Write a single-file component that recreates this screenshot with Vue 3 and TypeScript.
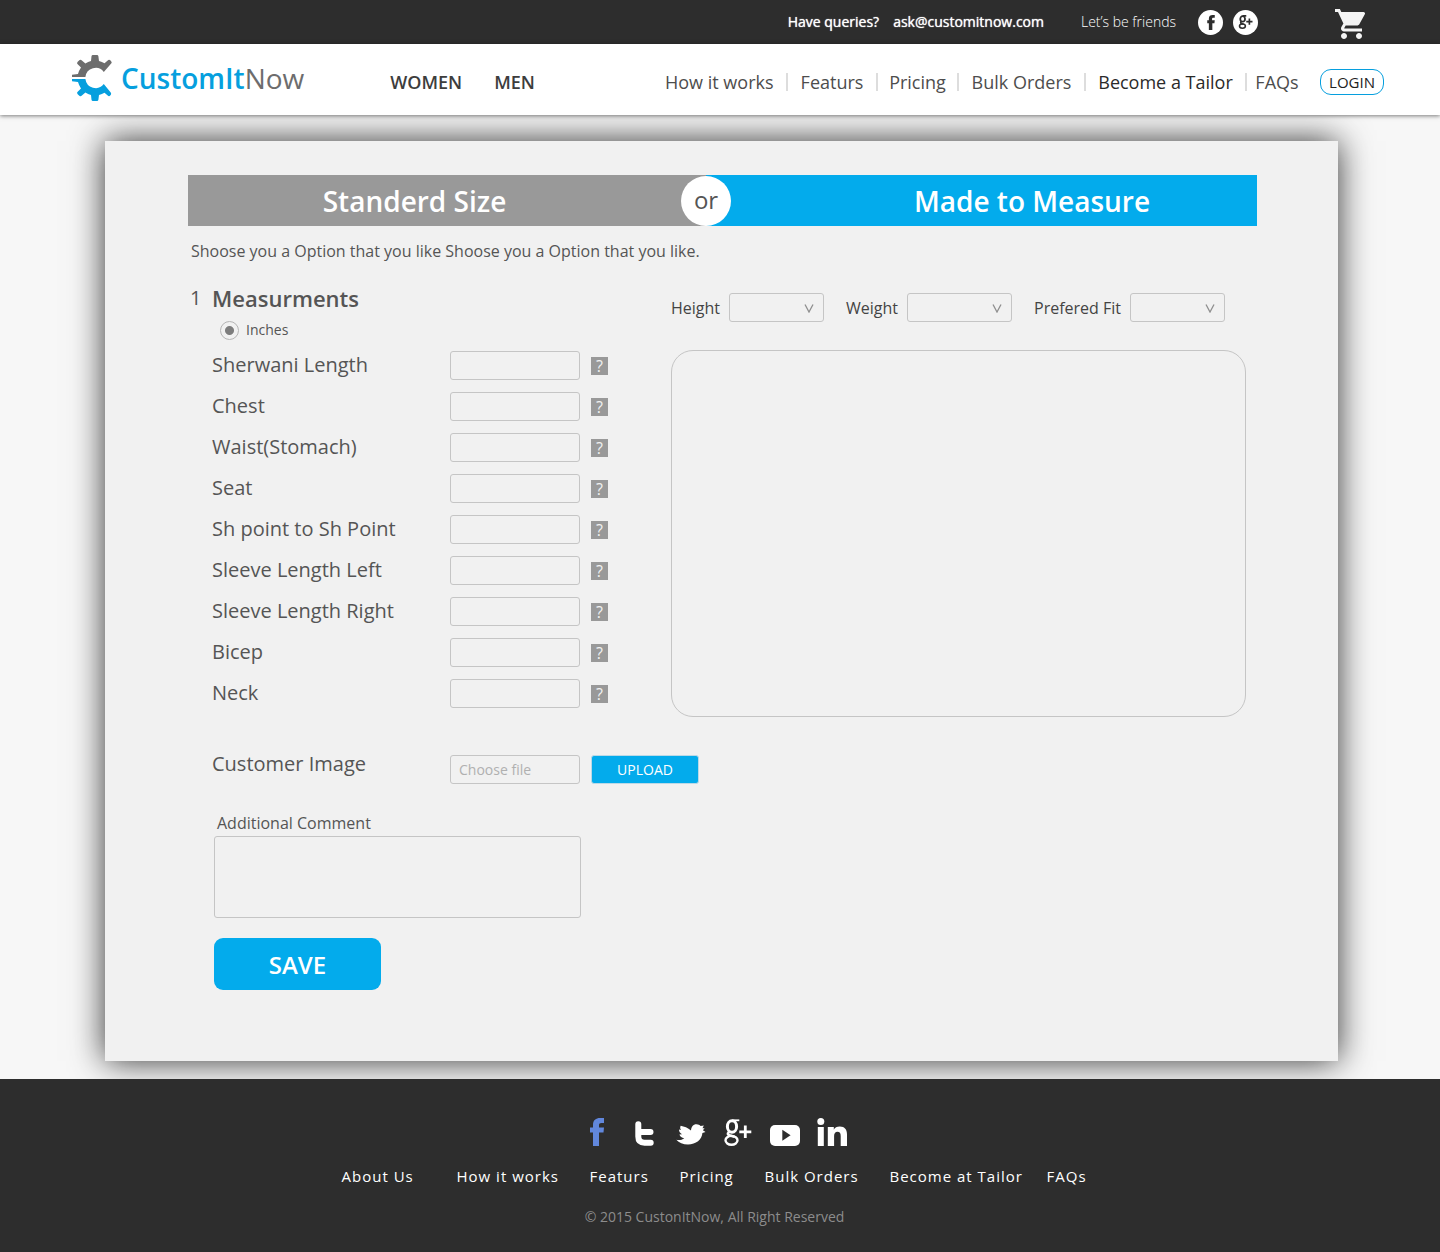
<script setup lang="ts">
import { ref } from 'vue'

interface SelectField {
  id: string
  label: string
  size: string
}

const navLinks: string[] = ['How it works', 'Featurs', 'Pricing', 'Bulk Orders', 'Become a Tailor', 'FAQs']
const footerLinks: string[] = ['About Us', 'How it works', 'Featurs', 'Pricing', 'Bulk Orders', 'Become at Tailor', 'FAQs']
const measurements: string[] = [
  'Sherwani Length',
  'Chest',
  'Waist(Stomach)',
  'Seat',
  'Sh point to Sh Point',
  'Sleeve Length Left',
  'Sleeve Length Right',
  'Bicep',
  'Neck',
]
const selects: SelectField[] = [
  { id: 'height', label: 'Height', size: 'medium' },
  { id: 'weight', label: 'Weight', size: 'wide' },
  { id: 'fit', label: 'Prefered Fit', size: 'medium' },
]
const values = ref<string[]>(measurements.map(() => ''))
const unit = ref<string>('inches')
const comment = ref<string>('')
</script>

<template>
  <div class="page">
    <div class="topbar">
      <p class="contact">
        <span>Have queries?</span>
        <a href="#">ask@customitnow.com</a>
      </p>
      <span class="friends">Let’s be friends</span>
      <div class="circles">
        <a href="#" class="circle" aria-label="Facebook">
          <svg width="8" height="15" viewBox="0 0 14 28"><path fill="#2d2d2d" d="M3 28V15.500H0V10h3V7c0-5 3-7 7-7h4v5h-2.500C9.700 5 9 5.800 9 7.300V10h5l-.6 5.500H9.500V28z" /></svg>
        </a>
        <a href="#" class="circle" aria-label="Google Plus">
          <svg width="15" height="14" viewBox="0 0 27 27" fill="none" stroke="#2d2d2d">
            <ellipse cx="8" cy="7.600" rx="4.600" ry="5.400" stroke-width="3.400" />
            <ellipse cx="7.600" cy="21.300" rx="5.700" ry="4.100" stroke-width="3" />
            <path d="M8 1.700h7M6 12.500c-3 2-2.500 3.600 1 4.400l3 .8" stroke-width="3" />
            <path d="M15 12.800h12M21 6.600v12.400" stroke-width="3.200" />
          </svg>
        </a>
      </div>
      <a href="#" class="cart" aria-label="Cart">
        <svg width="30" height="30" viewBox="1 2 20 20" fill="#f4f4f4"><path d="M7 18c-1.100 0-1.990.9-1.990 2S5.900 22 7 22s2-.9 2-2-.9-2-2-2zM1 2v2h2l3.600 7.590-1.350 2.450c-.16.28-.25.61-.25.96 0 1.100.9 2 2 2h12v-2H7.420c-.14 0-.25-.11-.25-.25l.03-.12.9-1.630h7.450c.75 0 1.410-.41 1.750-1.030l3.580-6.490A1.003 1.003 0 0 0 20 4H5.210l-.94-2H1zm16 16c-1.100 0-1.990.9-1.990 2s.89 2 1.990 2 2-.9 2-2-.9-2-2-2z" /></svg>
      </a>
    </div>

    <header class="header">
      <a href="#" class="logo">
        <svg width="40" height="46" viewBox="0 0 40 46">
          <path fill="#6d6d6d" d="M0 19.800 6 19Q7 15.500 9 12.600L5.200 8.800Q4.900 7.600 5.700 6.700L7.600 5Q8.700 4.400 9.600 5.200L13.400 8.400Q16 6.800 19 6L19.500 1.200Q19.700 0 20.900 0H25Q26.200 0 26.400 1.200L27 6Q30 6.700 32.500 8.300L36.300 5Q37.400 4.400 38.300 5.300L39.600 7Q39.900 7.600 39.400 8.200L31.800 17A10.300 10.300 0 0 0 13.400 22H0Z" />
          <path fill="#069fde" d="M0 24H13.400A10.300 10.300 0 0 0 31.800 29L38.900 37.800Q39.300 38.600 39 39.500L38 40.700Q37.400 41.400 36.300 41L32.500 37.700Q30 39.300 27 40L26.400 44.800Q26.200 46 25 46H20.900Q19.700 46 19.500 44.800L19 40Q16 39.200 13.400 37.600L9.600 40.800Q8.700 41.600 7.600 41L5.700 39.300Q4.900 38.400 5.200 37.200L9 33.400Q7 30.500 6 27L0 26.200Z" />
        </svg>
        <span class="brand"><b>CustomIt</b>Now</span>
      </a>
      <nav class="genders" aria-label="Departments">
        <a href="#">WOMEN</a>
        <a href="#">MEN</a>
      </nav>
      <nav class="links" aria-label="Main">
        <a v-for="link in navLinks" :key="link" href="#" :class="{ current: link === 'Become a Tailor' }">{{ link }}</a>
      </nav>
      <button type="button" class="login">LOGIN</button>
    </header>

    <main class="main">
      <form class="card" @submit.prevent>
        <div class="tabs">
          <button type="button" class="tab standard">Standerd Size</button>
          <div class="divider"><span class="or">or</span></div>
          <button type="button" class="tab measure">Made to Measure</button>
        </div>
        <p class="intro">Shoose you a Option that you like Shoose you a Option that you like.</p>

        <div class="columns">
          <section class="left">
            <h2 class="title"><span class="number">1</span>Measurments</h2>
            <label class="unit">
              <input v-model="unit" type="radio" name="unit" value="inches" />
              Inches
            </label>
            <div class="fields">
              <div v-for="(name, i) in measurements" :key="name" class="field">
                <label :for="`m-${i}`">{{ name }}</label>
                <input :id="`m-${i}`" v-model="values[i]" type="text" class="box" />
                <button type="button" class="help" :aria-label="`Help: ${name}`">?</button>
              </div>
            </div>
          </section>

          <section class="right">
            <div class="selects">
              <div v-for="s in selects" :key="s.id" class="pick">
                <label :for="s.id">{{ s.label }}</label>
                <div class="select" :class="s.size">
                  <select :id="s.id"><option value=""></option></select>
                  <svg width="10" height="9" viewBox="0 0 10 9"><path d="M1 .5 5 8 9 .5" fill="none" stroke="#8f8f8f" stroke-width="1.300" /></svg>
                </div>
              </div>
            </div>
            <div class="preview"></div>
          </section>
        </div>

        <div class="field upload-row">
          <label for="photo">Customer Image</label>
          <input id="photo" type="text" class="box" placeholder="Choose file" readonly />
          <button type="button" class="upload">UPLOAD</button>
        </div>

        <div class="comment">
          <label for="comment">Additional Comment</label>
          <textarea id="comment" v-model="comment"></textarea>
        </div>
        <button type="submit" class="save">SAVE</button>
      </form>
    </main>

    <footer class="footer">
      <div class="social">
        <a href="#" aria-label="Facebook">
          <svg width="14" height="28" viewBox="0 0 14 28"><path fill="#6187dc" d="M3 28V14.500H0V9.500h3V7c0-5 3-7 7-7h4v5h-2.500C9.700 5 9 5.800 9 7.300v2.200h5l-.5 5H9V28z" /></svg>
        </a>
        <a href="#" aria-label="Tumblr">
          <svg width="19" height="25" viewBox="0 0 19 25" fill="none" stroke="#fff" stroke-width="6" stroke-linecap="round"><path d="M3.300 3.300V15.500Q3.300 21.700 9.500 21.700H15.700M3.300 11H15.500" /></svg>
        </a>
        <a href="#" aria-label="Twitter">
          <svg width="30" height="22" viewBox="0 0 30 22"><path fill="#fff" d="M.3 15.800C3 16.500 6 16 8.300 14.200 5.600 13.800 4.200 12.400 3.400 10.400L6 10.300C4 9 3 7.500 3 5.500L5 6C4 4.800 4 3.300 4.700 1.800 8 2.600 12 3.700 15 6.500 15.300 3 17 .3 20.500.3 22.300.3 23.600 1 24.600 2L27.800 1.500 26.500 4.200 28.600 4.300 26.900 6.300 29.500 8 26.400 9C26 15.500 20 20.500 12 20.500 7 20.500 3 19 .3 15.800Z" /></svg>
        </a>
        <a href="#" aria-label="Google Plus">
          <svg width="28" height="27" viewBox="0 0 28 27" fill="none" stroke="#fff">
            <ellipse cx="8" cy="7.500" rx="4.600" ry="5.800" stroke-width="3" />
            <ellipse cx="7.500" cy="21.300" rx="6" ry="4.400" stroke-width="2.400" />
            <path d="M8 1.300h7.300" stroke-width="1.800" />
            <path d="M5.500 12.500c-2.500 2.200-2 3.600 1.500 4.300l3.500.9" stroke-width="2.600" />
            <path d="M15.300 12.800h12M21.300 6.600v12.400" stroke-width="2.800" />
          </svg>
        </a>
        <a href="#" aria-label="YouTube">
          <svg width="30" height="21" viewBox="0 0 30 21"><rect width="30" height="21" rx="5" fill="#fff" /><path fill="#2d2d2d" d="M12.300 4.700 20.600 10.200 12.300 15.700z" /></svg>
        </a>
        <a href="#" aria-label="LinkedIn">
          <svg width="30" height="28" viewBox="0 0 30 28" fill="#fff"><circle cx="3.800" cy="3.500" r="3.500" /><path d="M.8 9h6v19h-6zM10.800 9h6v2.700c1-2 3-3.200 6-3.200 5 0 7.200 3 7.200 8V28h-6.300V18c0-3-1-4.300-3.200-4.300-2.300 0-3.400 1.800-3.400 4.300v10h-6.300z" /></svg>
        </a>
      </div>
      <nav class="footer-links" aria-label="Footer">
        <a v-for="link in footerLinks" :key="link" href="#">{{ link }}</a>
      </nav>
      <p class="copyright">© 2015 CustonItNow, All Right Reserved</p>
    </footer>
  </div>
</template>

<style>
body {
  margin: 0;
  background: #f7f7f7;
}
</style>

<style scoped>
.page,
.page * {
  box-sizing: border-box;
}
.page {
  font-family: 'Open Sans', 'Noto Sans', sans-serif;
  color: #555;
}
.page svg {
  display: block;
}
a {
  color: inherit;
  text-decoration: none;
}
p,
h2 {
  margin: 0;
}
button,
input,
select,
textarea {
  font-family: inherit;
  margin: 0;
}
button {
  border: 0;
  padding: 0;
  cursor: pointer;
}

.topbar {
  display: flex;
  align-items: center;
  justify-content: flex-end;
  height: 44px;
  padding-right: 75px;
  background: #2d2d2d;
  color: #fff;
  font-size: 14px;
  line-height: 20px;
}
.contact {
  display: flex;
  gap: 14px;
  text-shadow: 0 0 1px #fff;
}
.friends {
  margin-left: 37px;
  font-weight: 300;
}
.circles {
  display: flex;
  gap: 10px;
  margin-left: 22px;
}
.circle {
  display: grid;
  place-items: center;
  width: 25px;
  height: 25px;
  border-radius: 50%;
  background: #fff;
}
.cart {
  margin-left: 77px;
  padding-top: 4px;
}

.header {
  position: relative;
  z-index: 1;
  display: flex;
  align-items: center;
  height: 71px;
  padding: 4px 56px 0 72px;
  background: #fff;
  box-shadow: 0 1px 4px rgba(0, 0, 0, 0.5);
}
.logo {
  display: flex;
  align-items: center;
  gap: 9px;
  padding-bottom: 8px;
}
.brand {
  font-size: 28px;
  line-height: 46px;
  color: #6d6d6d;
}
.brand b {
  font-weight: 600;
  color: #069fde;
}
.genders {
  display: flex;
  gap: 32px;
  margin-left: 86px;
  font-size: 18px;
  font-weight: 600;
  color: #3d3d3d;
}
.links {
  display: grid;
  grid-template-columns: 121px 90px 81px 127px 161px 62px;
  margin-left: auto;
  font-size: 18px;
  line-height: 18px;
  color: #4d4d4d;
}
.links a {
  white-space: nowrap;
  text-align: center;
}
.links a:first-child {
  text-align: left;
}
.links a + a {
  border-left: 2px solid #ddd;
}
.links .current {
  color: #2a2a2a;
}
.login {
  width: 64px;
  height: 26px;
  margin-left: 13px;
  border: 1px solid #069fde;
  border-radius: 11px;
  background: #fff;
  color: #222;
  font-size: 15px;
}

.main {
  padding: 26px 102px 18px 105px;
}
.card {
  padding: 34px 81px 71px 83px;
  background: #f1f1f1;
  box-shadow: 0 0 32px rgba(0, 0, 0, 0.8);
}
.tabs {
  display: grid;
  grid-template-columns: 518fr 0 551fr;
  height: 51px;
}
.tab {
  color: #fff;
  font-size: 28px;
  font-weight: 600;
}
.standard {
  padding-right: 65px;
  background: #999;
}
.measure {
  padding-left: 101px;
  background: #03abec;
}
.divider {
  position: relative;
}
.or {
  position: absolute;
  top: 1px;
  left: -25px;
  width: 50px;
  height: 50px;
  border-radius: 50%;
  background: #fff;
  font-size: 24px;
  line-height: 48px;
  text-align: center;
}
.intro {
  padding: 14px 0 0 3px;
  font-size: 16px;
  line-height: 22px;
}

.columns {
  display: grid;
  grid-template-columns: 483px 1fr;
  padding-top: 22px;
}
.title {
  display: flex;
  align-items: center;
  padding-left: 2px;
  font-size: 22px;
  font-weight: 600;
  line-height: 28px;
}
.number {
  width: 22px;
  font-size: 20px;
  font-weight: 400;
}
.unit {
  display: flex;
  align-items: center;
  gap: 7px;
  margin: 8px 0 0 32px;
  font-size: 14px;
  line-height: 20px;
}
.unit input {
  appearance: none;
  width: 19px;
  height: 19px;
  border: 1px solid #b5b5b5;
  border-radius: 50%;
}
.unit input:checked {
  background: radial-gradient(circle, #7d7d7d 4px, transparent 5px);
}
.fields {
  display: grid;
  gap: 12px;
  margin-top: 11px;
}
.field {
  display: grid;
  grid-template-columns: 238px 130px auto;
  justify-content: start;
  padding-left: 24px;
}
.field label {
  font-size: 20px;
  line-height: 27px;
}
.box {
  width: 100%;
  height: 29px;
  padding: 0 8px;
  border: 1px solid #c5c5c5;
  border-radius: 3px;
  background: transparent;
  color: #555;
  font-size: 14px;
}
.box::placeholder {
  color: #b0b0b0;
  opacity: 1;
}
.help {
  width: 17px;
  height: 18px;
  margin: 6px 0 0 11px;
  background: #999;
  color: #f1f1f1;
  font-size: 16px;
  line-height: 18px;
}

.right {
  padding-right: 11px;
}
.selects {
  display: flex;
  gap: 22px;
  padding-top: 9px;
}
.pick {
  display: flex;
  align-items: center;
  gap: 9px;
  font-size: 16px;
  color: #444;
}
.pick label {
  white-space: nowrap;
}
.select {
  position: relative;
  height: 29px;
}
.medium {
  width: 95px;
}
.wide {
  width: 105px;
}
.select select {
  appearance: none;
  width: 100%;
  height: 100%;
  border: 1px solid #c5c5c5;
  border-radius: 3px;
  background: transparent;
}
.select svg {
  position: absolute;
  top: 11px;
  right: 10px;
  pointer-events: none;
}
.preview {
  height: 367px;
  margin-top: 28px;
  border: 1px solid #c5c5c5;
  border-radius: 22px;
}

.upload-row {
  margin-top: 38px;
}
.upload-row label {
  line-height: 18px;
}
.upload {
  width: 108px;
  height: 29px;
  margin-left: 11px;
  border: 1px solid #bcd9e6;
  border-radius: 3px;
  background: #03abec;
  color: #fff;
  font-size: 14px;
}
.comment {
  width: 393px;
  margin-top: 28px;
  padding-left: 26px;
}
.comment label {
  display: block;
  padding: 0 0 2px 3px;
  font-size: 16px;
  line-height: 22px;
}
textarea {
  display: block;
  width: 100%;
  height: 82px;
  border: 1px solid #c5c5c5;
  border-radius: 3px;
  background: transparent;
  resize: none;
}
.save {
  display: block;
  width: 167px;
  height: 52px;
  margin: 20px 0 0 26px;
  border-radius: 9px;
  background: #03abec;
  color: #fff;
  font-size: 24px;
  font-weight: 600;
}

.footer {
  position: relative;
  padding: 37px 11px 25px 0;
  background: #2d2d2d;
  color: #fff;
}
.social {
  display: grid;
  grid-template-columns: repeat(6, 47px);
  justify-content: center;
  justify-items: center;
  align-items: end;
  height: 30px;
}
.footer-links {
  display: grid;
  grid-template-columns: 115px 133px 90px 85px 125px 157px 41px;
  justify-content: center;
  margin-top: 18px;
  font-size: 15px;
  line-height: 24px;
  letter-spacing: 1px;
}
.footer-links a {
  white-space: nowrap;
}
.copyright {
  margin-top: 19px;
  color: #8c8c8c;
  font-size: 14px;
  line-height: 20px;
  text-align: center;
}
</style>
